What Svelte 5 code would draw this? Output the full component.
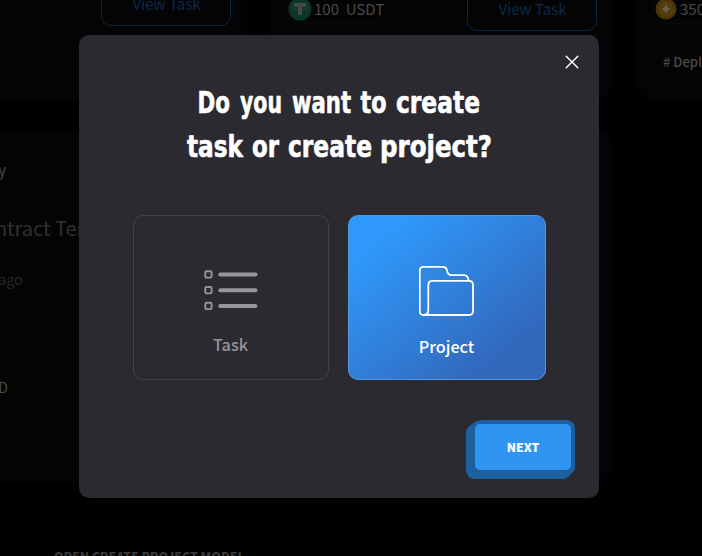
<script>
  const headline = [
    { text: 'Do', x: 10.5, y: 22, w: 32.5 },
    { text: 'you', x: 53, y: 22, w: 42 },
    { text: 'want', x: 105, y: 22, w: 59 },
    { text: 'to', x: 173.5, y: 22, w: 26 },
    { text: 'create', x: 209, y: 22, w: 84 },
    { text: 'task', x: 0, y: 66, w: 56 },
    { text: 'or', x: 65, y: 66, w: 27 },
    { text: 'create', x: 101, y: 66, w: 84 },
    { text: 'project?', x: 193, y: 66, w: 112 }
  ];
  const rows = [5.5, 21.25, 37];
  let selected = $state('project');
</script>

<div class="screen">
  <div class="board">
    <article class="card top">
      <div class="actions first"><span class="chip" style:width="88px"></span><span class="view">View Task</span></div>
      <span class="chip" style:width="86px"></span>
    </article>
    <article class="card top">
      <div class="actions">
        <span class="chip coin" style:width="104px">
          <svg width="24" height="24" viewBox="0 0 24 24"><circle cx="12" cy="12" r="11.5" fill="#0b3528" /><path d="M6 6h12v3.5h-4V18h-4V9.500H6z" fill="#444846" /><ellipse cx="12" cy="11" rx="8" ry="1.8" fill="none" stroke="#3b4642" stroke-width=".7" /></svg>
          <b>100&nbsp; USDT</b>
        </span>
        <span class="view">View Task</span>
      </div>
      <span class="chip hollow"></span>
    </article>
    <article class="card top">
      <div class="actions">
        <span class="chip coin gold" style:width="140px">
          <svg width="22" height="22" viewBox="0 0 22 22"><circle cx="11" cy="11" r="10.500" fill="#4a3509" /><circle cx="11" cy="11" r="7.500" fill="#543d0e" /><path d="M11 6.500q1 3.500 4.500 4.500q-3.500 1-4.500 4.500q-1-3.500-4.500-4.500q3.500-1 4.500-4.500z" fill="#686052" /></svg>
          <b>350&nbsp; USDT</b>
        </span>
      </div>
      <span class="chip tag">#&nbsp;Deploy</span>
    </article>
    <article class="card lower">
      <span class="chip end" style:width="94px">y</span>
      <h3>Contract Tes</h3>
      <p class="age">ago</p>
      <span class="chip end usd" style:width="96px">USD</span>
      <span class="chip" style:width="86px"></span>
    </article>
    <article class="card"></article>
  </div>
  <div class="caption">OPEN CREATE PROJECT MODEL</div>

  <section class="modal" role="dialog" aria-label="Create">
    <button class="close" aria-label="Close">
      <svg width="14" height="14" viewBox="0 0 14 14"><path d="M1.200 1.200 12.800 12.800M12.800 1.200 1.200 12.800" stroke="#fff" stroke-width="1.450" stroke-linecap="round" /></svg>
    </button>
    <h2>
      <svg width="306" height="80" viewBox="0 0 306 80">
        {#each headline as word}
          <text x={word.x} y={word.y} textLength={word.w} lengthAdjust="spacingAndGlyphs">{word.text}</text>
        {/each}
      </svg>
    </h2>
    <div class="options">
      <button class="option task" onclick={() => (selected = 'task')}>
        <svg width="54" height="43" viewBox="0 0 54 43">
          {#each rows as y}
            <rect x="1.300" y={y - 3.2} width="6.300" height="6.300" rx="1.300" fill="none" stroke="#96959a" stroke-width="1.900" />
            <path d="M16.400 {y}H51.400" stroke="#96959a" stroke-width="4.200" stroke-linecap="round" />
          {/each}
        </svg>
        <span>Task</span>
      </button>
      <button class="option project" onclick={() => (selected = 'project')}>
        <svg width="56" height="51" viewBox="0 0 56 51" fill="none" stroke="#fff" stroke-width="1.800" stroke-linecap="round" stroke-linejoin="round">
          <path d="M4.500 49Q.8 49 .8 45V4.700Q.8 .9 4.500 .9H24Q27.500 .9 27.900 4.200C28.300 7.200 29 9.200 32.500 9.200H45Q49 9.200 49.500 14.700" />
          <path d="M4.500 49C8 49 9.300 47.500 9.300 44V19.200Q9.300 14.900 13.500 14.900H50Q54 14.900 54 19.200V45Q54 49 50 49H4.500" />
        </svg>
        <span>Project</span>
      </button>
    </div>
    <button class="next">
      <svg width="109" height="59" viewBox="0 0 109 59"><path d="M16 0H100Q109 0 109 9V47Q109 50 106.500 52.500L102.500 56.500Q100 59 96 59H10Q0 59 0 49V14Q0 9 3 6.500L8 2.500Q11 0 16 0Z" fill="#1e609f" /></svg>
      <span>NEXT</span>
    </button>
  </section>
</div>

<style>
  :global(body) { background: #000; overflow: hidden; }
  .screen { position: relative; width: 702px; height: 556px; overflow: hidden; background: #000; font-family: 'Noto Sans CJK SC', 'Noto Sans CJK JP', sans-serif; }
  .screen * { box-sizing: border-box; }
  .board { display: grid; grid-template-columns: repeat(3, 343px); grid-auto-rows: 352px; gap: 30px 23px; margin: -252px 0 0 -96px; width: 1075px; }
  .card { display: flex; flex-direction: column; align-items: flex-start; padding: 22px 16px; border-radius: 20px; background: #040404; }
  .top { justify-content: flex-end; }
  .actions { display: flex; justify-content: space-between; align-items: flex-end; width: 100%; height: 50px; margin-bottom: 13px; }
  .actions.first { height: 43px; margin-bottom: 18px; }
  .chip { display: flex; align-items: center; flex: none; height: 34px; border: 1px solid #0a0a0a; border-radius: 17px; color: #494949; font-size: 15px; font-weight: 400; white-space: nowrap; }
  .hollow { width: 90px; }
  .coin { align-self: flex-start; margin-top: 12px; height: 31px; padding-left: 1px; gap: 2px; font-size: 15px; }
  .coin b { font-weight: 400; }
  .coin svg { flex: none; }
  .gold { padding-left: 2px; gap: 3px; }
  .tag { width: 110px; padding-left: 10px; font-size: 13px; font-weight: 500; }
  .view { display: flex; align-items: center; justify-content: center; width: 130px; height: 43px; padding: 0 0 2px 1px; border: 1px solid #0a2542; border-radius: 10px; color: #0a294b; font-size: 15px; }
  .lower { padding-top: 24px; }
  .end { height: 31px; justify-content: flex-end; padding-right: 7px; font-size: 15px; }
  .lower h3 { margin: 28px 0 0 50px; color: #303030; font-size: 20px; line-height: 30px; font-weight: 400; }
  .age { margin: 24px 0 80px 78px; color: #242424; font-size: 14.500px; line-height: 24px; }
  .usd { margin-bottom: 24px; font-size: 14px; }
  .caption { margin: 65px 0 0 54px; color: #383838; font-size: 12.200px; font-weight: 900; line-height: 18px; white-space: nowrap; }
  .modal { position: absolute; left: 79px; top: 35px; width: 520px; height: 463px; display: flex; flex-direction: column; padding: 20px 0 19px 54px; border-radius: 10px; background: #2b2a30; }
  button { padding: 0; border: 0; background: none; font-family: inherit; cursor: pointer; }
  .close { align-self: flex-end; width: 14px; height: 14px; margin-right: 20px; }
  .close svg, h2 svg { display: block; }
  h2 { margin: 22px 0 0 54px; height: 80px; }
  h2 svg { overflow: visible; }
  h2 text { fill: #fff; stroke: #fff; stroke-width: 0.6px; stroke-linejoin: round; font: 700 30px 'DejaVu Sans Condensed', 'DejaVu Sans', sans-serif; }
  .options { display: flex; gap: 19px; margin-top: 44px; }
  .option { display: flex; flex-direction: column; align-items: center; height: 165px; border: 1px solid #434248; border-radius: 10px; font-size: 16.200px; font-weight: 500; }
  .option span { line-height: 24px; padding-right: 1px; }
  .task { width: 196px; padding-top: 53px; color: #96959a; }
  .task span { margin-top: 20px; }
  .project { width: 198px; padding-top: 50px; border-color: #5497e1; color: #fff; background: linear-gradient(to bottom right, #2f99fc 14%, #3268bc 82%); }
  .project span { margin-top: 17px; }
  .next { position: relative; align-self: flex-end; width: 109px; height: 59px; margin: auto 24px 0 0; padding: 4px 0 0 9px; display: flex; }
  .next svg { position: absolute; inset: 0; }
  .next span { position: relative; display: flex; align-items: center; justify-content: center; width: 96px; height: 46px; padding: 0 0 1px; border-radius: 5px; background: #3094f3; color: #fff; font-size: 12.200px; font-weight: 900; }
</style>
